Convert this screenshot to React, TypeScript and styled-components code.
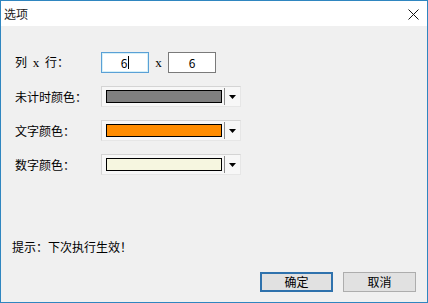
import React from 'react';
import styled, { createGlobalStyle } from 'styled-components';

const GlobalStyle = createGlobalStyle`
  html, body {
    margin: 0;
    padding: 0;
    background: #f0f0f0;
  }
  * {
    box-sizing: border-box;
  }
`;

const FONT = `"Noto Sans CJK SC", "Microsoft YaHei", sans-serif`;

const Window = styled.div`
  width: 428px;
  height: 303px;
  display: flex;
  flex-direction: column;
  border: 1px solid #2f86c0;
  background: #f0f0f0;
  font-family: ${FONT};
  font-size: 12px;
  color: #000;
`;

const TitleBar = styled.div`
  height: 25px;
  flex-shrink: 0;
  display: flex;
  align-items: center;
  justify-content: space-between;
  background: #fff;
  padding-left: 3px;
  padding-right: 8px;
`;

const Title = styled.span`
  font-size: 12px;
  line-height: 14px;
  color: #1a1a1a;
`;

const CloseButton = styled.div`
  width: 12px;
  height: 12px;
  display: flex;
  align-items: center;
  justify-content: center;
  margin-top: 2px;
`;

const Body = styled.div`
  flex: 1;
  display: flex;
  flex-direction: column;
  padding: 26px 10px 10px 11px;
`;

const Form = styled.div`
  display: flex;
  flex-direction: column;
  gap: 13px;
  padding-left: 3px;
`;

const Row = styled.div`
  display: flex;
  align-items: center;
  height: 21px;
`;

const Label = styled.span`
  width: 86px;
  white-space: pre;
  word-spacing: 3px;
  line-height: 14px;
`;

const Cross = styled.span`
  font-family: "Liberation Serif", serif;
  font-size: 13px;
`;

const Input = styled.div<{ $focused?: boolean }>`
  width: 48px;
  height: 21px;
  display: flex;
  align-items: center;
  justify-content: center;
  background: #fff;
  border: 1px solid ${(p) => (p.$focused ? '#5aa0d6' : '#7a7a7a')};
  box-shadow: ${(p) => (p.$focused ? 'inset 0 0 0 1px #d6f0f8' : 'none')};
  font-size: 12px;
  line-height: 14px;
`;

const Caret = styled.span`
  display: inline-block;
  width: 1px;
  height: 13px;
  background: #000;
  margin-left: 1px;
`;

const Times = styled.span`
  width: 19px;
  text-align: center;
  font-family: "Liberation Serif", serif;
  font-size: 13px;
  line-height: 14px;
`;

const Combo = styled.div`
  width: 140px;
  height: 21px;
  display: flex;
  align-items: center;
  background: #f7f7f7;
  border: 1px solid #d4d4d4;
  border-right-color: #e6e6e6;
  border-bottom-color: #e6e6e6;
  padding-left: 4px;
`;

const Swatch = styled.div<{ $color: string }>`
  width: 116px;
  height: 13px;
  background: ${(p) => p.$color};
  border: 1px solid #000;
`;

const Divider = styled.div`
  width: 1px;
  height: 17px;
  margin-left: 2px;
  background: #8c8c8c;
`;

const Arrow = styled.div`
  flex: 1;
  display: flex;
  align-items: center;
  justify-content: center;
`;

const Hint = styled.div`
  margin-top: auto;
  line-height: 14px;
`;

const Buttons = styled.div`
  display: flex;
  justify-content: flex-end;
  gap: 10px;
  margin-top: 18px;
  padding-right: 1px;
`;

const Button = styled.div<{ $primary?: boolean }>`
  width: 73px;
  height: 20px;
  display: flex;
  align-items: center;
  justify-content: center;
  background: #e1e1e1;
  border: ${(p) => (p.$primary ? '2px solid #2f72ad' : '1px solid #adadad')};
  font-size: 12px;
  line-height: 14px;
`;

const colorRows = [
  { label: '未计时颜色：', color: '#808080' },
  { label: '文字颜色：', color: '#ff8c00' },
  { label: '数字颜色：', color: '#f6f6e0' },
];

export default function App() {
  return (
    <>
      <GlobalStyle />
      <Window>
        <TitleBar>
          <Title>选项</Title>
          <CloseButton>
            <svg width="11" height="11" viewBox="0 0 11 11">
              <path d="M0.5 0.5 L10.5 10.5 M10.5 0.5 L0.5 10.5" stroke="#111" strokeWidth="1" />
            </svg>
          </CloseButton>
        </TitleBar>
        <Body>
          <Form>
            <Row>
              <Label>
                列 <Cross>x</Cross> 行：
              </Label>
              <Input $focused>
                6<Caret />
              </Input>
              <Times>x</Times>
              <Input>6</Input>
            </Row>
            {colorRows.map((r) => (
              <Row key={r.label}>
                <Label>{r.label}</Label>
                <Combo>
                  <Swatch $color={r.color} />
                  <Divider />
                  <Arrow>
                    <svg width="7" height="4" viewBox="0 0 7 4">
                      <path d="M0 0 H7 L3.5 4 Z" fill="#000" />
                    </svg>
                  </Arrow>
                </Combo>
              </Row>
            ))}
          </Form>
          <Hint>提示：下次执行生效！</Hint>
          <Buttons>
            <Button $primary>确定</Button>
            <Button>取消</Button>
          </Buttons>
        </Body>
      </Window>
    </>
  );
}
